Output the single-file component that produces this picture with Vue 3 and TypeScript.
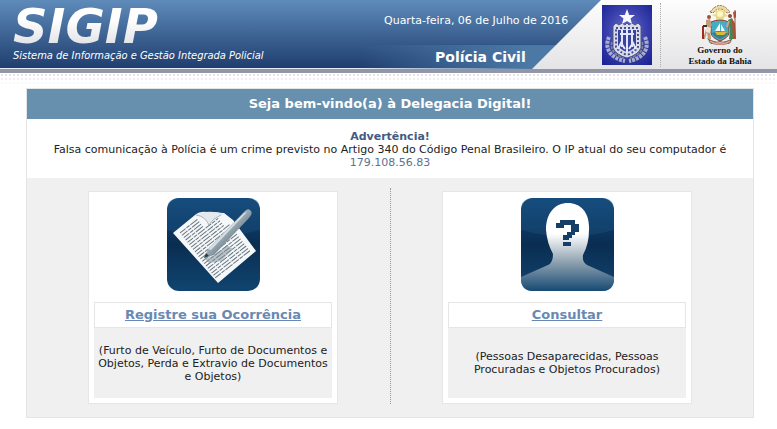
<script setup lang="ts">
interface Service {
  id: 'report' | 'search'
  title: string
  text: string
}

const ipAddress = '179.108.56.83'
const today = 'Quarta-feira, 06 de Julho de 2016'

const services: Service[] = [
  {
    id: 'report',
    title: 'Registre sua Ocorrência',
    text: '(Furto de Veículo, Furto de Documentos e Objetos, Perda e Extravio de Documentos e Objetos)',
  },
  {
    id: 'search',
    title: 'Consultar',
    text: '(Pessoas Desaparecidas, Pessoas Procuradas e Objetos Procurados)',
  },
]

// Ruled lines of the document icon; those beside the folded corner are shorter.
const sheetLines = Array.from({ length: 20 }, (_, i) => {
  const y = -34 + i * 3
  const end = y < -22 ? 3 : y < -10 ? 20 : 25
  return `M-19 ${y}H${end}`
})
</script>

<template>
  <header class="banner">
    <div class="brand">
      <h1 class="logo">SIGIP</h1>
      <p class="tagline">Sistema de Informação e Gestão Integrada Policial</p>
    </div>
    <div class="context">
      <p class="date">{{ today }}</p>
      <p class="unit">Polícia Civil</p>
    </div>
    <div class="seals">
      <svg class="shield" viewBox="0 0 50 60" aria-hidden="true">
        <defs>
          <radialGradient id="shieldBg" cy=".45" r=".75">
            <stop offset="0" stop-color="#6d72cf" />
            <stop offset=".55" stop-color="#373da9" />
            <stop offset="1" stop-color="#171e91" />
          </radialGradient>
        </defs>
        <rect width="50" height="60" fill="url(#shieldBg)" />
        <g fill="none" stroke="#a9aec4" stroke-width="4" stroke-dasharray="3 1">
          <path d="M7 32C2 43 8 53 23 56" />
          <path d="M43 32C48 43 42 53 27 56" />
          <path d="M10 37C8 45 13 50 22 53M40 37C42 45 37 50 28 53" stroke="#7c83a8" stroke-width="2" />
        </g>
        <path d="M11 21L14 18L17 20L20 18L23 20L25 18L27 20L30 18L33 20L36 18L39 21V43Q36 50 25 53Q14 50 11 43Z" fill="#d9dce8" stroke="#4c5484" />
        <path d="M14 23H36V42Q33 47 25 50Q17 47 14 42Z" fill="none" stroke="#474f8c" stroke-width="2" stroke-dasharray="2 2" />
        <path d="M16 25H34V41Q31 45 25 47Q19 45 16 41Z" fill="#3b429c" />
        <path d="M25 23V48M18 29H32M20 25V42M30 25V42" fill="none" stroke="#e1e5ff" stroke-width="2" />
        <path d="M16 44L19 38L23 44M27 44L31 38L34 44" fill="none" stroke="#e1e5ff" stroke-width="2" />
        <path d="M25 4L27.200 10H33L28.500 13.500L30 19L25 16L20 19L21.500 13.500L17 10H22.800Z" fill="#f7f7ff" />
      </svg>
      <div class="state">
        <svg class="crest" viewBox="0 0 36 42" aria-hidden="true">
          <path d="M8 9Q18-4 28 9L25 10Q18 2 11 10Z" fill="#eddc9d" stroke="#926542" stroke-width="1" stroke-dasharray="2 1" />
          <path d="M18 4L20 8L24 7L23 11L26 13L22 14L21 18L18 16L14 17L14 14L10 12L14 11L13 7L16 8Z" fill="#e7d98a" />
          <circle cx="18" cy="11" r="3" fill="#fff8c6" />
          <path d="M5 35Q18 43 31 35L27 41L18 38L9 41Z" fill="#347e3d" />
          <path d="M9 19Q18 15 27 19V30Q26 35 18 38Q10 35 9 30Z" fill="#45acc6" stroke="#963724" stroke-width="1" />
          <path d="M10 30L16 28L26 30Q24 34 18 36Q12 34 10 30Z" fill="#3e7f86" />
          <path d="M18 20V28H13ZM19 21L23 28H19Z" fill="#f2f5f5" />
          <path d="M13 29H25L22 32H15Z" fill="#d9b93a" />
          <circle cx="7" cy="14" r="2" fill="#9d5436" />
          <path d="M4 17L8 16L10 22L8 26L9 36H6L5 29L3 36H1L4 26Z" fill="#c59a7b" />
          <path d="M4 23L9 25L8 30L4 29Z" fill="#eee2d5" />
          <path d="M1 23V36" stroke="#9c2d25" stroke-width="2" />
          <path d="M1 23H5" stroke="#333" stroke-width="2" />
          <circle cx="28" cy="13" r="2" fill="#8f4f35" />
          <path d="M26 17L30 15L33 22L32 36H27L28 27Z" fill="#3f8a55" />
          <path d="M30 16L33 20L34 36H31Z" fill="#c9472f" />
          <path d="M27 18L25 24" stroke="#d9a284" stroke-width="2" />
          <path d="M33 7V35" stroke="#815c45" />
          <path d="M31 9L34 8V14L32 16Z" fill="#b54a35" />
          <path d="M8 37Q18 43 28 37L29 39Q18 45 7 39Z" fill="#e1aaa0" stroke="#963f36" stroke-width=".500" />
        </svg>
        <p class="state-name">Governo do<br />Estado da Bahia</p>
      </div>
    </div>
  </header>

  <main class="page">
    <section class="panel">
      <h2 class="welcome">Seja bem-vindo(a) à Delegacia Digital!</h2>
      <div class="notice">
        <strong>Advertência!</strong>
        <p>
          Falsa comunicação à Polícia é um crime previsto no Artigo 340 do Código Penal
          Brasileiro. O IP atual do seu computador é <span class="ip">{{ ipAddress }}</span>
        </p>
      </div>
      <div class="services">
        <div v-for="service in services" :key="service.id" class="cell">
          <article class="card">
            <svg v-if="service.id === 'report'" class="icon" viewBox="0 0 93 93" aria-hidden="true">
              <defs>
                <linearGradient id="tileA" x2="0" y2="1">
                  <stop offset="0" stop-color="#124a7b" />
                  <stop offset=".5" stop-color="#0a2d51" />
                  <stop offset="1" stop-color="#104570" />
                </linearGradient>
                <linearGradient id="pen" x1="0" y1="0" x2="1" y2="1">
                  <stop offset=".3" stop-color="#c7d1d7" />
                  <stop offset=".5" stop-color="#94a4ae" />
                  <stop offset=".7" stop-color="#536b7b" />
                </linearGradient>
              </defs>
              <rect width="93" height="93" rx="12" fill="url(#tileA)" />
              <path d="M0 32Q46 45 93 32V12Q93 0 81 0H12Q0 0 0 12Z" fill="#1c5383" opacity=".4" />
              <path d="M6 35L28 17Q33 13 40 14L57 15L66 22L89 53L51 85Z" fill="#f5f7f8" />
              <g transform="translate(49 50) rotate(-38)" stroke="#677681" stroke-width="1">
                <path v-for="line in sheetLines" :key="line" :d="line" stroke-dasharray="7 1 4 1 9 1" />
              </g>
              <path d="M29 17Q38 18 42 27Q48 18 58 16Q48 13 38 14Z" fill="#e3e9ed" />
              <path d="M29 17Q38 18 42 27Q46 20 54 17" fill="none" stroke="#a9b5bd" />
              <path d="M38 61L48 57L60 47L66 51L54 63L42 65Z" fill="#7d8d97" opacity=".5" />
              <path d="M37 60L41 51L77 14Q81 9 84 13Q86 16 82 20L47 57Z" fill="url(#pen)" />
              <path d="M41 51L77 15L80 14L44 52Z" fill="#d6dee2" />
              <path d="M37 60L39 55L42 58Z" fill="#293f50" />
            </svg>
            <svg v-else class="icon" viewBox="0 0 93 93" aria-hidden="true">
              <defs>
                <linearGradient id="tileB" x2="0" y2="1">
                  <stop offset="0" stop-color="#124a7b" />
                  <stop offset=".5" stop-color="#0a2d51" />
                  <stop offset="1" stop-color="#104570" />
                </linearGradient>
                <linearGradient id="person" x1="0" y1="5" x2="0" y2="93" gradientUnits="userSpaceOnUse">
                  <stop offset=".35" stop-color="#fff" />
                  <stop offset=".68" stop-color="#8c9fae" />
                  <stop offset="1" stop-color="#164a74" />
                </linearGradient>
              </defs>
              <rect width="93" height="93" rx="12" fill="url(#tileB)" />
              <path d="M0 32Q46 45 93 32V12Q93 0 81 0H12Q0 0 0 12Z" fill="#1c5383" opacity=".4" />
              <path d="M0 79L27 67Q32 65 32 56Q26 45 25 32C25 15 34 5 47 5S69 15 68 32Q68 46 62 57Q61 64 66 67L93 79V81Q93 93 81 93H12Q0 93 0 81Z" fill="url(#person)" />
              <path d="M39 22H54V26H58V34H54V37H51V40H48V42H42V37H46V34H50V27H43V30H35V25H39ZM42 44H50V48H42Z" fill="#153f66" />
            </svg>
            <h3 class="card-title"><a href="#">{{ service.title }}</a></h3>
            <p class="card-text">{{ service.text }}</p>
          </article>
        </div>
      </div>
    </section>
  </main>
</template>

<style>
body {
  margin: 0;
  background: #fff;
}
</style>

<style scoped>
* {
  box-sizing: border-box;
}

h1,
h2,
h3,
p {
  margin: 0;
}

.banner,
.page {
  font-family: Verdana, 'DejaVu Sans', sans-serif;
}

.banner {
  display: flex;
  height: 73px;
  color: #fff;
  background: linear-gradient(#5e8bba, #1e3d6e);
  border-bottom: 4px solid #9296a6;
  box-shadow: inset 0 -1px #e7ecf3;
}

.brand {
  flex: 1;
  padding: 0 0 0 13px;
  white-space: nowrap;
}

.logo {
  width: max-content;
  padding: 4px 16px 0 0;
  font-size: 48px;
  line-height: 44px;
  font-style: italic;
  font-weight: 700;
  color: transparent;
  background: linear-gradient(#fff 40%, #dedfe2);
  background-clip: text;
}

.tagline {
  font-family: 'DejaVu Sans Condensed', 'DejaVu Sans', sans-serif;
  font-size: 11px;
  line-height: 16px;
  font-style: italic;
}

.context {
  display: grid;
  grid-template-rows: 44px 25px;
  width: 240px;
  padding: 0 0 0 24px;
  white-space: nowrap;
  background:
    linear-gradient(90deg, transparent, #2f568a 60%) 0 44px / 100% 1px no-repeat,
    linear-gradient(90deg, transparent, #4b78a5 70%) bottom / 100% 24px no-repeat;
}

.date {
  font-size: 11px;
  line-height: 42px;
}

.unit {
  padding: 0 0 0 51px;
  font-size: 14px;
  line-height: 26px;
  font-weight: 700;
}

.seals {
  display: flex;
  width: 246px;
  margin: 0 0 0 -69px;
  padding: 0 0 0 71px;
  background: linear-gradient(#fdfdfd, #e4e4e6);
  clip-path: polygon(70px 0, 100% 0, 100% 69px, 1px 69px);
}

.shield {
  width: 50px;
  height: 60px;
  margin: 5px 0 0;
}

.state {
  flex: 1;
  margin: 3px 0 2px 8px;
  padding: 0 0 0 2px;
  border-left: 1px dotted #aaa;
  text-align: center;
}

.crest {
  display: block;
  width: 36px;
  height: 42px;
  margin: 0 auto;
}

.state-name {
  font-family: 'Liberation Serif', serif;
  font-size: 9px;
  line-height: 11px;
  font-weight: 700;
  color: #111;
}

.page {
  padding: 15px 23px 11px 26px;
  font-size: 11px;
  line-height: 13px;
  color: #222;
  text-align: center;
  background:
    linear-gradient(rgb(255 255 255 / 30%), #fff 13px),
    radial-gradient(circle, #d0d3d8 1px, transparent 1px) 0 0 / 4px 4px;
}

.panel {
  border: 1px solid #e4e4e4;
  background: #f0f0f0;
}

.welcome {
  font-size: 13px;
  line-height: 30px;
  color: #fff;
  background: #6690ae;
}

.notice {
  padding: 11px 24px 9px;
  background: #fff;
}

.notice strong {
  color: #435b83;
}

.ip {
  color: #5d7191;
}

.services {
  display: grid;
  grid-template-columns: 1fr 1fr;
  padding: 10px 0 13px;
}

.cell {
  padding: 3px 52px 0 61px;
}

.cell + .cell {
  padding: 3px 61px 0 51px;
  border-left: 1px dotted #999;
}

.card {
  display: flex;
  flex-direction: column;
  padding: 6px 5px 5px;
  background: #fff;
  border: 1px solid #e6e6e6;
}

.icon {
  width: 93px;
  height: 93px;
  margin: 0 auto 11px;
}

.card-title {
  font-size: 13px;
  line-height: 24px;
  border: 1px solid #e6e6e6;
}

.card-title a {
  color: #6889b3;
}

.card-text {
  display: grid;
  place-items: center;
  height: 70px;
  padding: 0 2px;
  background: #f0f0f0;
}
</style>
